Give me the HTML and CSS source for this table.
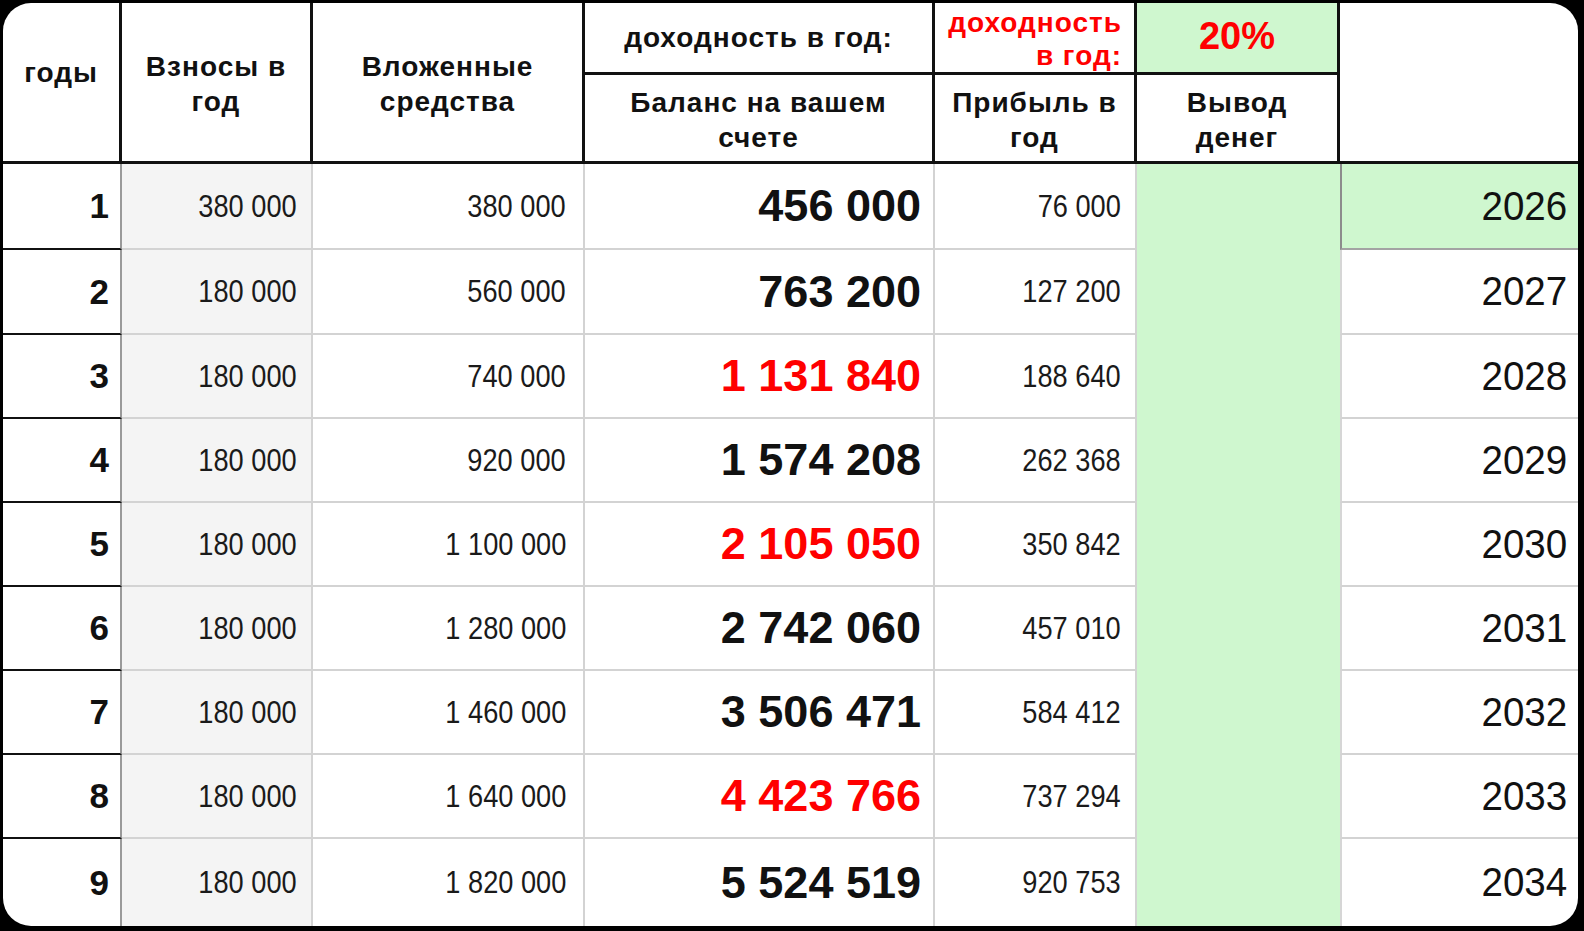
FILE: index.html
```html
<!DOCTYPE html>
<html lang="ru">
<head>
<meta charset="utf-8">
<title>Доходность</title>
<link rel="stylesheet" href="styles.css">
</head>
<body>
<div class="card">
  <div class="h span2 h-years">годы</div>
  <div class="h span2">Взносы в<br>год</div>
  <div class="h span2">Вложенные<br>средства</div>
  <div class="h h-yield">доходность в год:</div>
  <div class="h h-red">доходность<br>в год:</div>
  <div class="h h-rate">20%</div>
  <div class="h span2 h-blank"></div>
  <div class="h">Баланс на вашем<br>счете</div>
  <div class="h">Прибыль в<br>год</div>
  <div class="h">Вывод<br>денег</div>

  <div class="c idx">1</div><div class="c num gray"><span>380 000</span></div><div class="c num c3"><span>380 000</span></div><div class="c bal">456 000</div><div class="c num c5"><span>76 000</span></div><div class="c green"></div><div class="c yr yr-first"><span>2026</span></div>
  <div class="c idx">2</div><div class="c num gray"><span>180 000</span></div><div class="c num c3"><span>560 000</span></div><div class="c bal">763 200</div><div class="c num c5"><span>127 200</span></div><div class="c green"></div><div class="c yr"><span>2027</span></div>
  <div class="c idx">3</div><div class="c num gray"><span>180 000</span></div><div class="c num c3"><span>740 000</span></div><div class="c bal red">1 131 840</div><div class="c num c5"><span>188 640</span></div><div class="c green"></div><div class="c yr"><span>2028</span></div>
  <div class="c idx">4</div><div class="c num gray"><span>180 000</span></div><div class="c num c3"><span>920 000</span></div><div class="c bal">1 574 208</div><div class="c num c5"><span>262 368</span></div><div class="c green"></div><div class="c yr"><span>2029</span></div>
  <div class="c idx">5</div><div class="c num gray"><span>180 000</span></div><div class="c num c3"><span>1 100 000</span></div><div class="c bal red">2 105 050</div><div class="c num c5"><span>350 842</span></div><div class="c green"></div><div class="c yr"><span>2030</span></div>
  <div class="c idx">6</div><div class="c num gray"><span>180 000</span></div><div class="c num c3"><span>1 280 000</span></div><div class="c bal">2 742 060</div><div class="c num c5"><span>457 010</span></div><div class="c green"></div><div class="c yr"><span>2031</span></div>
  <div class="c idx">7</div><div class="c num gray"><span>180 000</span></div><div class="c num c3"><span>1 460 000</span></div><div class="c bal">3 506 471</div><div class="c num c5"><span>584 412</span></div><div class="c green"></div><div class="c yr"><span>2032</span></div>
  <div class="c idx">8</div><div class="c num gray"><span>180 000</span></div><div class="c num c3"><span>1 640 000</span></div><div class="c bal red">4 423 766</div><div class="c num c5"><span>737 294</span></div><div class="c green"></div><div class="c yr"><span>2033</span></div>
  <div class="c idx last">9</div><div class="c num gray last"><span>180 000</span></div><div class="c num c3 last"><span>1 820 000</span></div><div class="c bal last">5 524 519</div><div class="c num c5 last"><span>920 753</span></div><div class="c green last"></div><div class="c yr last"><span>2034</span></div>
</div>
</body>
</html>
```

FILE: styles.css
```css
* {
  box-sizing: border-box;
  margin: 0;
  padding: 0;
}

html,
body {
  background: #000;
}

body {
  margin: 0;
  font-family: "Liberation Sans", Arial, sans-serif;
  color: #111;
}

.card {
  margin: 3px 0 0 3px;
  width: 1575px;
  height: 923px;
  background: #fff;
  border-radius: 28px;
  overflow: hidden;
  display: grid;
  grid-template-columns: 119px 191px 272px 350px 202px 203px 238px;
  grid-template-rows: 72px 89px 86px 85px 84px 84px 84px 84px 84px 84px 1fr;
}

/* header cells */
.h {
  display: flex;
  align-items: center;
  justify-content: center;
  text-align: center;
  font-weight: bold;
  font-size: 28px;
  letter-spacing: 1px;
  line-height: 35px;
  padding-top: 3px;
  border-right: 3px solid #111;
  border-bottom: 3px solid #111;
}

.span2 {
  grid-row: span 2;
}

.h-years {
  padding-top: 0;
  padding-bottom: 20px;
}

.h-yield {
  padding-top: 0;
}

.h-red {
  color: #ff0000;
  justify-content: flex-end;
  text-align: right;
  line-height: 33px;
  padding-right: 12px;
  padding-top: 2px;
}

.h-rate {
  background: #cff7cf;
  color: #ff0000;
  font-size: 38px;
  letter-spacing: 0;
  padding-top: 0;
  padding-bottom: 2px;
}

.h-blank {
  border-right: none;
}

/* body cells */
.c {
  display: flex;
  align-items: center;
  justify-content: flex-end;
  border-right: 2px solid #d3d3d3;
  border-bottom: 2px solid #d3d3d3;
  white-space: nowrap;
}

.c span {
  display: inline-block;
  transform-origin: right center;
}

.idx {
  font-weight: bold;
  font-size: 35px;
  padding-right: 11px;
  border-right: 2px solid #9a9a9a;
  border-bottom: 2px solid #111;
}

.num {
  font-size: 32px;
  color: #1a1a1a;
}

.num span {
  transform: scaleX(0.85);
}

.gray {
  background: #f4f4f4;
  padding-right: 14px;
}

.c3 {
  padding-right: 17px;
}

.c5 {
  padding-right: 14px;
}

.bal {
  font-weight: bold;
  font-size: 45px;
  padding-right: 12px;
  color: #111;
}

.red {
  color: #ff0000;
}

.green {
  background: #cff7cf;
  border-right: none;
  border-bottom: none;
}

.yr {
  font-size: 41px;
  padding-right: 11px;
  border-right: none;
  border-left: 2px solid #d6d6d6;
}

.yr span {
  transform: scaleX(0.94);
}

.yr-first {
  background: #cff7cf;
  border-left: 2px solid #8c8c8c;
  border-bottom: 2px solid #a3a3a3;
}

.last {
  border-bottom: none;
}
```
